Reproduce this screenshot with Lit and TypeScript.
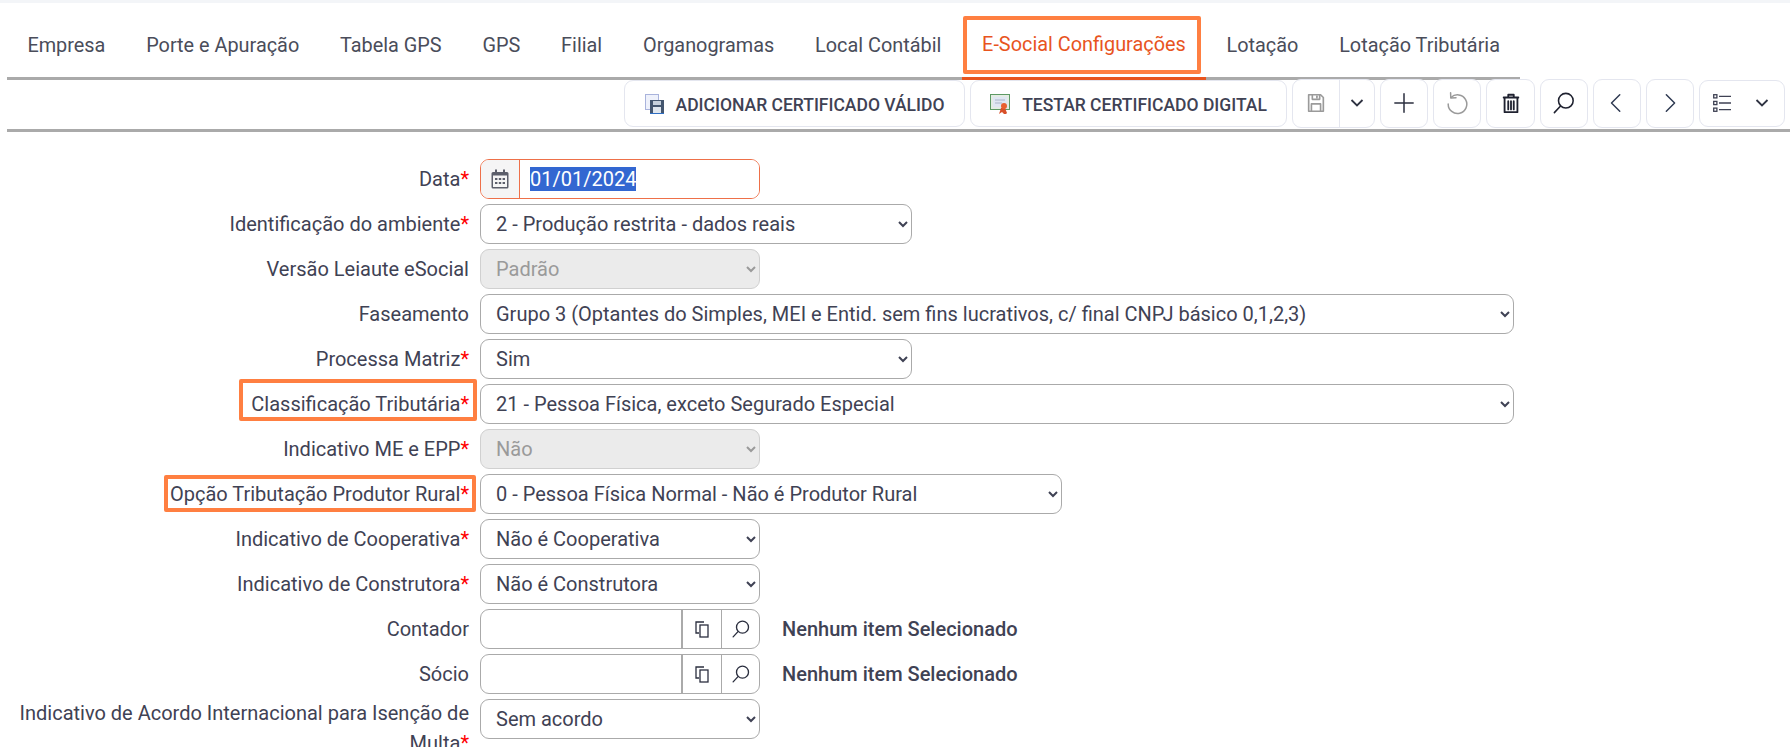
import { LitElement, html, css, svg } from "lit";
import { customElement } from "lit/decorators.js";

type Row = {
  label: string;
  req?: boolean;
  kind: "date" | "select" | "lookup";
  value?: string;
  size?: "narrow" | "medium" | "wide" | "opcao";
  disabled?: boolean;
  mark?: boolean;
};

const ROWS: Row[] = [
  { label: "Data", req: true, kind: "date" },
  { label: "Identificação do ambiente", req: true, kind: "select", size: "medium", value: "2 - Produção restrita - dados reais" },
  { label: "Versão Leiaute eSocial", kind: "select", size: "narrow", value: "Padrão", disabled: true },
  { label: "Faseamento", kind: "select", size: "wide", value: "Grupo 3 (Optantes do Simples, MEI e Entid. sem fins lucrativos, c/ final CNPJ básico 0,1,2,3)" },
  { label: "Processa Matriz", req: true, kind: "select", size: "medium", value: "Sim" },
  { label: "Classificação Tributária", req: true, kind: "select", size: "wide", value: "21 - Pessoa Física, exceto Segurado Especial", mark: true },
  { label: "Indicativo ME e EPP", req: true, kind: "select", size: "narrow", value: "Não", disabled: true },
  { label: "Opção Tributação Produtor Rural", req: true, kind: "select", size: "opcao", value: "0 - Pessoa Física Normal - Não é Produtor Rural", mark: true },
  { label: "Indicativo de Cooperativa", req: true, kind: "select", size: "narrow", value: "Não é Cooperativa" },
  { label: "Indicativo de Construtora", req: true, kind: "select", size: "narrow", value: "Não é Construtora" },
  { label: "Contador", kind: "lookup" },
  { label: "Sócio", kind: "lookup" },
  { label: "Indicativo de Acordo Internacional para Isenção de Multa", req: true, kind: "select", size: "narrow", value: "Sem acordo" },
];

const TABS = ["Empresa", "Porte e Apuração", "Tabela GPS", "GPS", "Filial", "Organogramas", "Local Contábil", "E-Social Configurações", "Lotação", "Lotação Tributária"];

const I = (w: number, body: unknown, stroke = "#3f4254", sw = 1.4) => html`<svg width=${w} height=${w} viewBox="0 0 24 24" fill="none" stroke=${stroke} stroke-width=${sw} stroke-linecap="round" stroke-linejoin="round">${body}</svg>`;

const iconAdd = html`<svg width="20" height="20" viewBox="0 0 20 20"><rect x="0.5" y="0.5" width="13" height="15" fill="#eef1fb" stroke="#a9b3dc"/><rect x="5" y="6" width="14" height="14" fill="#44566f"/><rect x="8" y="7" width="8" height="4" fill="#c6d0dc"/><rect x="8" y="13" width="8" height="7" fill="#dfe6ee"/><rect x="5" y="19" width="14" height="1" fill="#2f6fc4"/></svg>`;
const iconCert = html`<svg width="21" height="20" viewBox="0 0 21 20"><rect x="0.5" y="0.5" width="19" height="15" fill="#e3ece4" stroke="#5d9a64"/><rect x="3" y="3" width="14" height="10" fill="#dfe6f2"/><path d="M5 6h10M5 9h7" stroke="#aab6c8" stroke-width="1"/><path d="M11 14l-2 6 3-2 2 2 2 0 1-1-2-5z" fill="#d8502a"/><circle cx="14" cy="12" r="3" fill="#e8602f"/></svg>`;
const iconSave = I(22, svg`<path d="M4 3h13l3 3v15H4z"/><path d="M8 3v5h8V3"/><path d="M13 4.5v2"/><path d="M7 21v-8h10v8"/>`, "#9a9a9a", 1.8);
const iconChev = html`<svg width="14" height="14" viewBox="0 0 14 14" fill="none" stroke="#2f3342" stroke-width="1.8"><path d="M1.5 4L7 9.5 12.5 4"/></svg>`;
const iconPlus = I(20, svg`<path d="M12 1v22M1 12h22"/>`, "#2b2f3f", 1.8);
const iconUndo = I(24, svg`<path d="M6 6.5A9.3 9.3 0 1 1 3.2 13"/><path d="M5.6 1.8L5.8 7l5.2-.2"/>`, "#9a9a9a", 1.5);
const iconTrash = I(22, svg`<path d="M4 6h16M9 5V3h6v2"/><path d="M5 6.5V22h14V6.5"/><path d="M9 10v9M12 10v9M15 10v9"/>`, "#1f2230", 2);
const iconSearch = I(22, svg`<circle cx="14" cy="9.5" r="8"/><path d="M8 15.5L1.5 22.5"/>`, "#1f2230", 1.7);
const iconPrev = I(22, svg`<path d="M15 3L6 12l9 9"/>`, "#2f3a52", 1.6);
const iconNext = I(22, svg`<path d="M8 3l9 9-9 9"/>`, "#2f3a52", 1.6);
const iconList = html`<svg width="18" height="18" viewBox="0 0 18 18" fill="none" stroke="#3f4254" stroke-width="1.3"><rect x="0.7" y="0.7" width="3.2" height="3.2"/><rect x="0.7" y="7.4" width="3.2" height="3.2"/><rect x="0.7" y="14.1" width="3.2" height="3.2"/><path d="M6 2.3h12M6 9h12M6 15.7h12"/></svg>`;
const iconCal = html`<svg width="18" height="20" viewBox="0 0 18 20"><path d="M2 3h14a1.5 1.5 0 0 1 1.5 1.5V18a1.5 1.5 0 0 1-1.5 1.5H2A1.5 1.5 0 0 1 .5 18V4.5A1.5 1.5 0 0 1 2 3z" fill="#5c5f6b"/><rect x="4" y="0.5" width="2" height="4" fill="#5c5f6b"/><rect x="12" y="0.5" width="2" height="4" fill="#5c5f6b"/><rect x="2" y="6.5" width="14" height="11.5" fill="#f5f5f5"/><g fill="#5c5f6b"><rect x="4" y="9" width="2.4" height="2"/><rect x="7.8" y="9" width="2.4" height="2"/><rect x="11.6" y="9" width="2.4" height="2"/><rect x="4" y="13" width="2.4" height="2"/><rect x="7.8" y="13" width="2.4" height="2"/><rect x="11.6" y="13" width="2.4" height="2"/></g></svg>`;
const iconCopy = html`<svg width="15" height="17" viewBox="0 0 15 17" fill="none" stroke="#2b2f3f" stroke-width="1.3"><path d="M9 1H1v11h3"/><rect x="5" y="4" width="8" height="12" fill="#fff"/></svg>`;
const iconFind = I(18, svg`<circle cx="14" cy="9.5" r="8"/><path d="M8 15.5L1.5 22.5"/>`, "#2b2f3f", 1.8);

@customElement("app-root")
export class AppRoot extends LitElement {
  static styles = css`
    :host {
      display: block;
      height: 747px;
      overflow: hidden;
      background: #fff;
      font-family: Roboto, "Liberation Sans", sans-serif;
      font-size: 20px;
      color: #3f4254;
      box-sizing: border-box;
      border-top: 3px solid #f3f5f8;
    }
    *, *::before, *::after { box-sizing: border-box; }
    .page { margin-left: 7px; position: relative; }
    .tabs {
      display: flex;
      width: 1513px;
      height: 77px;
      border-bottom: 3px solid #aaaaaa;
    }
    .tab {
      padding: 8px 20.4px 0;
      height: 77px;
      display: flex;
      align-items: center;
      color: #4a4d5a;
      white-space: nowrap;
      font-size: 19.88px;
    }
    .tab.active {
      color: #e8541e;
      border-bottom: 3px solid #e8541e;
      position: relative;
    }
    .tab.active::after {
      content: "";
      position: absolute;
      left: 1px; right: 5px; top: 13px; bottom: 3px;
      border: 4px solid #ff7f41;
      border-radius: 2px;
    }
    .toolbar {
      display: flex;
      justify-content: flex-end;
      align-items: center;
      gap: 5px;
      height: 52px;
      padding: 0 5px 3px 0;
      border-bottom: 3px solid #aaaaaa;
    }
    .btn {
      height: 49px;
      border: 1px solid #e4e6ef;
      border-radius: 9px;
      background: #fff;
      display: flex;
      align-items: center;
      justify-content: center;
    }
    .btn.square { width: 48px; }
    .btn.trash { width: 49px; }
    .btn.text {
      height: 47px;
      gap: 11px;
      font-weight: 500;
      font-size: 17.5px;
      padding: 2px 0 0;
      color: #3f4254;
    }
    .btn.text > span { margin-top: 2px; }
    .btn.add { width: 341px; }
    .btn.test { width: 317px; }
    .btn.group { width: 83px; padding: 0; }
    .btn.group > span { display: flex; align-items: center; justify-content: center; height: 100%; }
    .btn.group > span:first-child { width: 47px; border-right: 1px solid #e4e6ef; }
    .btn.group > span:last-child { flex: 1; }
    .btn.list { width: 86px; height: 47px; gap: 24px; padding-right: 2px; }
    .form {
      display: flex;
      flex-direction: column;
      gap: 5px;
      padding-top: 27px;
    }
    .row {
      display: grid;
      grid-template-columns: 462px auto;
      column-gap: 11px;
      min-height: 40px;
    }
    .label {
      display: flex;
      justify-content: flex-end;
      align-items: center;
      text-align: right;
      line-height: 1.5;
      padding-left: 10px;
    }
    .label .t { position: relative; display: block; }
    .req { color: #ff0000; }
    .label.mark .t::after {
      content: "";
      position: absolute;
      border: 4px solid #ff7f41;
      border-radius: 2px;
      top: -10px;
      bottom: -2px;
      left: -12px;
      right: -8px;
    }
    .label.mark.second .t::after {
      left: -6px;
      right: -7px;
      top: -4px;
      bottom: -3px;
    }
    .label.multi { align-items: flex-start; margin-top: -1px; }
    select {
      font: inherit;
      color: #3f4254;
      height: 40px;
      border: 1px solid #aaaaaa;
      border-radius: 9px;
      background-color: #fff;
      padding: 0 8px 0 11px;
      display: block;
    }
    select:disabled {
      background-color: #ebebeb;
      border-color: #d0d0d0;
      color: #9a9a9a;
      opacity: 1;
    }
    .narrow { width: 280px; }
    .medium { width: 432px; }
    .wide { width: 1034px; }
    .opcao { width: 582px; }
    .date {
      width: 280px;
      height: 40px;
      display: flex;
      border: 1px solid #ee7049;
      border-radius: 9px;
      overflow: hidden;
    }
    .date .addon {
      width: 39px;
      background: #f5f5f5;
      border-right: 1px solid #ee7049;
      display: flex;
      align-items: center;
      justify-content: center;
    }
    .date input {
      flex: 1;
      min-width: 0;
      border: 0;
      outline: 0;
      font: inherit;
      color: #3f4254;
      padding: 0 10px;
      background: #fff;
    }
    .date input::selection { background: #3367d1; color: #fff; }
    .lookup { display: flex; align-items: center; gap: 22px; }
    .lookup .box {
      width: 280px;
      height: 40px;
      display: flex;
      border: 1px solid #aaaaaa;
      border-radius: 9px;
      overflow: hidden;
    }
    .lookup .field { flex: 1; border-right: 2px solid #aaaaaa; }
    .lookup .b {
      width: 38px;
      display: flex;
      align-items: center;
      justify-content: center;
    }
    .lookup .b + .b { border-left: 1px solid #aaaaaa; }
    .none { font-weight: 500; white-space: nowrap; }
  `;

  firstUpdated() {
    const inp = this.renderRoot.querySelector<HTMLInputElement>(".date input");
    if (inp) { inp.focus(); inp.select(); }
  }

  private renderField(r: Row) {
    if (r.kind === "date") {
      return html`<div class="date"><span class="addon">${iconCal}</span><input type="text" value="01/01/2024" /></div>`;
    }
    if (r.kind === "lookup") {
      return html`<div class="lookup"><div class="box"><span class="field"></span><span class="b">${iconCopy}</span><span class="b">${iconFind}</span></div><span class="none">Nenhum item Selecionado</span></div>`;
    }
    return html`<div><select class=${r.size ?? "narrow"} ?disabled=${r.disabled}><option>${r.value}</option></select></div>`;
  }

  render() {
    return html`<div class="page">
      <nav class="tabs">
        ${TABS.map((t) => html`<div class="tab ${t.startsWith("E-Social") ? "active" : ""}">${t}</div>`)}
      </nav>
      <div class="toolbar">
        <div class="btn text add">${iconAdd}<span>ADICIONAR CERTIFICADO VÁLIDO</span></div>
        <div class="btn text test">${iconCert}<span>TESTAR CERTIFICADO DIGITAL</span></div>
        <div class="btn group"><span>${iconSave}</span><span>${iconChev}</span></div>
        <div class="btn square">${iconPlus}</div>
        <div class="btn square">${iconUndo}</div>
        <div class="btn trash">${iconTrash}</div>
        <div class="btn square">${iconSearch}</div>
        <div class="btn square">${iconPrev}</div>
        <div class="btn square">${iconNext}</div>
        <div class="btn list">${iconList}${iconChev}</div>
      </div>
      <div class="form">
        ${ROWS.map((r) => html`<div class="row">
          <label class="label ${r.mark ? "mark" : ""} ${r.label.startsWith("Opção") ? "second" : ""} ${r.label.length > 50 ? "multi" : ""}">
            <span class="t">${r.label}${r.req ? html`<span class="req">*</span>` : ""}</span>
          </label>
          ${this.renderField(r)}
        </div>`)}
      </div>
    </div>`;
  }
}
